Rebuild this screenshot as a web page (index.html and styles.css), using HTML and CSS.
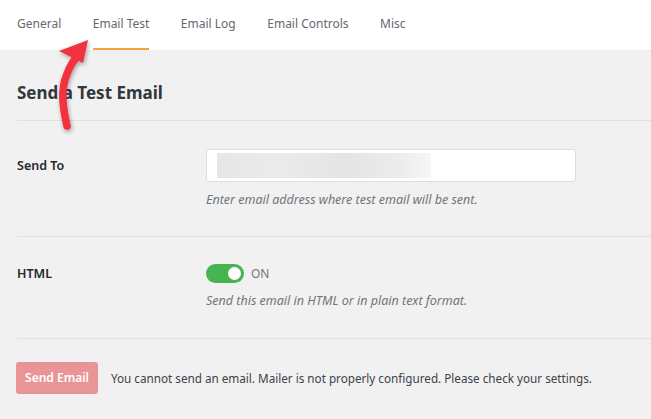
FILE: index.html
```html
<!DOCTYPE html>
<html lang="en">
<head>
    <meta charset="UTF-8">
    <title>Email Test</title>
    <link rel="stylesheet" href="styles.css">
</head>
<body>
    <div class="tabs">
        <a class="tab">General</a>
        <a class="tab active">Email Test</a>
        <a class="tab">Email Log</a>
        <a class="tab">Email Controls</a>
        <a class="tab">Misc</a>
    </div>

    <div class="page">
        <h1 class="title">Send a Test Email</h1>

        <div class="row row_to">
            <div class="label">Send To</div>
            <div class="field">
                <div class="input"><span class="blur"></span></div>
                <p class="desc">Enter email address where test email will be sent.</p>
            </div>
        </div>

        <div class="row row_html">
            <div class="label">HTML</div>
            <div class="field">
                <div class="switch_line">
                    <span class="switch"><span class="knob"></span></span>
                    <span class="switch_text">ON</span>
                </div>
                <p class="desc">Send this email in HTML or in plain text format.</p>
            </div>
        </div>

        <div class="submit">
            <span class="btn">Send Email</span>
            <span class="notice">You cannot send an email. Mailer is not properly configured. Please check your settings.</span>
        </div>
    </div>

    <!-- annotation arrow -->
    <svg class="arrow" width="110" height="140" viewBox="0 0 110 140">
        <defs>
            <filter id="sh" x="-30%" y="-30%" width="160%" height="160%">
                <feDropShadow dx="1" dy="2" stdDeviation="2" flood-color="#000" flood-opacity="0.35"/>
            </filter>
        </defs>
        <g filter="url(#sh)">
            <path d="M67 126 C63 108 60 90 67 74 C70 66 73 61 77 57" fill="none" stroke="#f2323e" stroke-width="7.5" stroke-linecap="round"/>
            <polygon points="88,40 59,51 83,63" fill="#f2323e"/>
        </g>
    </svg>
</body>
</html>
```

FILE: styles.css
```css
*{
    margin:0;
    padding:0;
    box-sizing:border-box;
}
body{
    width:651px;
    height:419px;
    overflow:hidden;
    background:#f1f1f1;
    font-family:"Noto Sans","Open Sans",sans-serif;
    font-size:12px;
    color:#23282d;
    position:relative;
}
.tabs{
    height:51px;
    background:#fff;
    border-bottom:1px dotted #e2e2e2;
    display:flex;
    gap:31.5px;
    padding-left:17px;
}
.tab{
    display:block;
    height:50px;
    line-height:48px;
    color:#646970;
    font-size:12px;
    border-bottom:2px solid transparent;
}
.tab.active{
    border-bottom-color:#f6a041;
}
.page{
    padding:0 0 0 17px;
}
.title{
    font-size:17px;
    font-weight:700;
    color:#32373c;
    height:70px;
    line-height:83px;
    border-bottom:1px solid #e1e1e1;
}
.row{
    display:flex;
    border-bottom:1px solid #e1e1e1;
}
.row_to{
    height:116px;
    padding-top:28px;
}
.row_html{
    height:102px;
    padding-top:27px;
}
.label{
    width:189px;
    font-weight:600;
    font-size:12.5px;
    color:#23282d;
}
.row_to .label{
    padding-top:8px;
}
.row_html .label{
    padding-top:1px;
}
.input{
    width:370px;
    height:33px;
    background:#fff;
    border:1px solid #dedede;
    border-radius:3px;
    padding:3px 0 3px 10px;
}
.blur{
    display:block;
    width:214px;
    height:25px;
    background:linear-gradient(90deg,#e6e6e6 0%,#ebebeb 30%,#e4e4e4 60%,#ececec 85%,#f6f6f6 100%);
}
.desc{
    margin-top:9px;
    font-style:italic;
    color:#70757a;
    font-size:12.5px;
}
.switch_line{
    display:flex;
    align-items:center;
    height:19px;
}
.switch{
    display:block;
    width:38px;
    height:19px;
    border-radius:10px;
    background:#46b450;
    position:relative;
}
.knob{
    position:absolute;
    right:3px;
    top:3px;
    width:13px;
    height:13px;
    border-radius:50%;
    background:#fff;
}
.switch_text{
    margin-left:7px;
    color:#72777c;
    font-size:12px;
}
.submit{
    display:flex;
    align-items:center;
    padding-top:23px;
}
.btn{
    display:block;
    width:82px;
    height:32px;
    line-height:31px;
    text-align:center;
    background:#e99597;
    color:#fff;
    font-weight:600;
    font-size:12px;
    border-radius:3px;
    margin-left:-1px;
}
.notice{
    margin-left:13px;
    color:#3c434a;
    font-size:11.7px;
}
.arrow{
    position:absolute;
    left:0;
    top:0;
}
```
